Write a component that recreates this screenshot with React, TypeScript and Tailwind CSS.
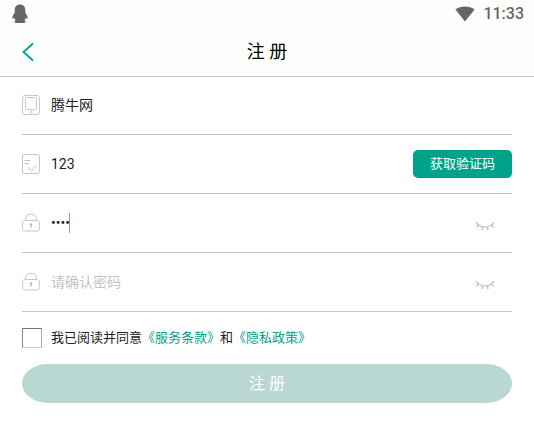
import { useState } from 'react'
import type { ReactNode } from 'react'

type FieldProps = {
  id: string
  label: string
  icon: ReactNode
  type?: 'text' | 'password'
  value: string
  placeholder?: string
  focused?: boolean
  onChange: (value: string) => void
  children?: ReactNode
}

function PenguinIcon() {
  return (
    <svg className="h-5 w-4" viewBox="0 0 16 20" fill="#666" aria-hidden="true">
      <path d="M8 0.5C4.700 0.500 2.700 2.800 2.700 6L2.700 8.800C1.500 10.500 0.200 12.400 0.300 14.200C0.400 15.200 1.200 14.900 2.100 13.600C2.300 14.800 2.800 15.700 3.500 16.500C2.500 17 2.100 17.700 2.500 18.300C2.800 18.800 3.900 19 5.500 19L10.500 19C12.100 19 13.200 18.800 13.500 18.300C13.900 17.700 13.500 17 12.500 16.500C13.200 15.700 13.700 14.800 13.900 13.600C14.800 14.900 15.600 15.200 15.700 14.200C15.800 12.400 14.500 10.500 13.300 8.800L13.300 6C13.300 2.800 11.300 0.500 8 0.500Z" />
    </svg>
  )
}

function WifiIcon() {
  return (
    <svg className="h-4 w-5" viewBox="0 0 20 16" fill="#666" aria-hidden="true">
      <path d="M0.400 3.600C3 1.500 6.300.4 10 .4s7 1.100 9.600 3.200L10 15.600z" />
    </svg>
  )
}

function TabletIcon() {
  return (
    <svg className="h-5 w-[18px]" viewBox="0 0 18 20" fill="none" stroke="#c8c8c8" aria-hidden="true">
      <rect x="0.500" y="0.500" width="17" height="19" rx="2.500" />
      <rect x="3.500" y="2.500" width="11" height="12" rx="1" />
      <circle cx="9" cy="17" r="1.100" strokeWidth="0.800" />
    </svg>
  )
}

function CodeIcon() {
  return (
    <svg className="h-5 w-[18px]" viewBox="0 0 18 20" fill="none" stroke="#c4c4c4" aria-hidden="true">
      <rect x="0.500" y="0.500" width="17" height="19" rx="2.500" />
      <path d="M2.500 6.500h6M2.500 9.500h4.500M6 13l3.500 3.500 5.500-5" />
    </svg>
  )
}

function LockIcon() {
  return (
    <svg className="h-5 w-[18px]" viewBox="0 0 18 20" fill="none" stroke="#c8c8c8" aria-hidden="true">
      <rect x="0.500" y="7.500" width="17" height="10.500" rx="2.500" />
      <path d="M3.500 7.500V6C3.500 3 5.800 1.200 9 1.200S14.500 3 14.500 6v1.500" />
      <circle cx="9" cy="11.500" r="1" fill="#b4b4b4" stroke="#b4b4b4" strokeWidth="0.500" />
      <path d="M9 12v3" stroke="#b4b4b4" />
    </svg>
  )
}

function ClosedEyeIcon() {
  return (
    <svg className="h-5 w-5" viewBox="0 0 20 20" fill="none" stroke="#bdbdbd" strokeWidth="1.200" aria-hidden="true">
      <path d="M0.800 9C3 12.200 6.200 14 10 14s7-1.800 9.200-5" />
      <path d="M3.200 11.800 1.800 14.800M7.700 13.900 7 17.200M12.300 13.900 13 17.200M16.800 11.800l1.400 3" />
    </svg>
  )
}

function Field({ id, label, icon, type = 'text', value, placeholder, focused, onChange, children }: FieldProps) {
  return (
    <div className="flex h-[59px] items-center border-b border-[#c4c4c4]">
      <label htmlFor={id} className="shrink-0">
        {icon}
      </label>
      <div className="relative ml-[11px] min-w-0 flex-1">
        <input
          id={id}
          aria-label={label}
          type={type}
          value={value}
          placeholder={placeholder}
          onChange={(event) => onChange(event.target.value)}
          className="block h-6 w-full bg-transparent text-sm leading-6 text-[#222] outline-none placeholder:text-[#c4c4c4]"
        />
        {focused && <span className="absolute top-0.5 left-[18px] h-5 w-px bg-[#999]" />}
      </div>
      {children}
    </div>
  )
}

function RevealButton({ label, onClick }: { label: string; onClick: () => void }) {
  return (
    <button type="button" aria-label={label} onClick={onClick} className="mr-[17px]">
      <ClosedEyeIcon />
    </button>
  )
}

export default function App() {
  const [phone, setPhone] = useState('腾牛网')
  const [code, setCode] = useState('123')
  const [password, setPassword] = useState('1234')
  const [confirm, setConfirm] = useState('')
  const [showPassword, setShowPassword] = useState(false)
  const [showConfirm, setShowConfirm] = useState(false)
  const [agreed, setAgreed] = useState(false)

  return (
    <div className="min-h-screen bg-white font-[Roboto,'Noto_Sans_CJK_SC',sans-serif] text-[#222]">
      <header className="bg-[#fefefc] shadow-[0_1px_0_#c4c4c4]">
        <div className="flex h-7 items-center justify-between pr-2.5 pl-3">
          <PenguinIcon />
          <div className="flex items-center gap-2">
            <WifiIcon />
            <span className="text-base font-medium text-[#666]">11:33</span>
          </div>
        </div>
        <div className="grid h-12 grid-cols-[1fr_auto_1fr] items-center px-[22px]">
          <button type="button" aria-label="返回" className="justify-self-start">
            <svg className="h-5 w-3" viewBox="0 0 12 20" fill="none" stroke="#00a28a" strokeWidth="1.800" aria-hidden="true">
              <path d="M11 1.500 1.500 10l9.500 8.500" />
            </svg>
          </button>
          <h1 className="text-lg text-black">注 册</h1>
        </div>
      </header>

      <form className="px-[22px]" onSubmit={(event) => event.preventDefault()}>
        <Field id="phone" label="手机号" icon={<TabletIcon />} value={phone} onChange={setPhone} />
        <Field id="code" label="验证码" icon={<CodeIcon />} value={code} onChange={setCode}>
          <button type="button" className="h-7 rounded-[5px] bg-[#00a28a] px-[17px] text-[13px] text-white">
            获取验证码
          </button>
        </Field>
        <Field
          id="password"
          label="密码"
          icon={<LockIcon />}
          type={showPassword ? 'text' : 'password'}
          value={password}
          focused
          onChange={setPassword}
        >
          <RevealButton label="显示密码" onClick={() => setShowPassword(!showPassword)} />
        </Field>
        <Field
          id="confirm"
          label="确认密码"
          icon={<LockIcon />}
          type={showConfirm ? 'text' : 'password'}
          value={confirm}
          placeholder="请确认密码"
          onChange={setConfirm}
        >
          <RevealButton label="显示确认密码" onClick={() => setShowConfirm(!showConfirm)} />
        </Field>

        <div className="flex h-[52px] items-center text-[13px]">
          <input
            id="agree"
            type="checkbox"
            checked={agreed}
            onChange={(event) => setAgreed(event.target.checked)}
            className="mr-[9px] h-5 w-5 appearance-none border border-t-[#777] border-r-[#aaa] border-b-[#ccc] border-l-[#888] bg-white checked:bg-[#00a28a]"
          />
          <label htmlFor="agree">我已阅读并同意</label>
          <a href="#terms" className="text-[#00a28a]">《服务条款》</a>
          <span>和</span>
          <a href="#privacy" className="text-[#00a28a]">《隐私政策》</a>
        </div>

        <button type="submit" className="block h-[39px] w-full rounded-[26px/50%] bg-[#b9d8d2] text-base text-white">
          注 册
        </button>
      </form>
    </div>
  )
}
